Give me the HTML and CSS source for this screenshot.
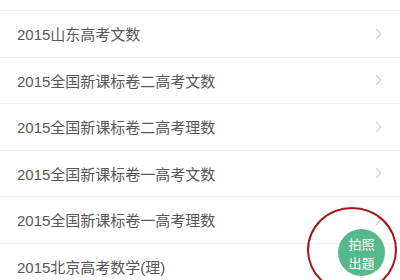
FILE: index.html
```html
<!DOCTYPE html>
<html lang="zh">
<head>
<meta charset="utf-8">
<link rel="stylesheet" href="styles.css">
</head>
<body>
<div class="page">
  <div class="stub"></div>
  <ul class="list">
    <li class="row"><span class="title">2015山东高考文数</span><svg class="chev" viewBox="0 0 7 12"><polyline points="1,1 6,6 1,11"/></svg></li>
    <li class="row"><span class="title">2015全国新课标卷二高考文数</span><svg class="chev" viewBox="0 0 7 12"><polyline points="1,1 6,6 1,11"/></svg></li>
    <li class="row"><span class="title">2015全国新课标卷二高考理数</span><svg class="chev" viewBox="0 0 7 12"><polyline points="1,1 6,6 1,11"/></svg></li>
    <li class="row"><span class="title">2015全国新课标卷一高考文数</span><svg class="chev" viewBox="0 0 7 12"><polyline points="1,1 6,6 1,11"/></svg></li>
    <li class="row"><span class="title">2015全国新课标卷一高考理数</span><svg class="chev" viewBox="0 0 7 12"><polyline points="1,1 6,6 1,11"/></svg></li>
    <li class="row"><span class="title">2015北京高考数学(理)</span><svg class="chev" viewBox="0 0 7 12"><polyline points="1,1 6,6 1,11"/></svg></li>
  </ul>
  <div class="annot"></div>
  <button class="fab">拍照<br>出题</button>
</div>
</body>
</html>
```
FILE: styles.css
```css
html, body {
  margin: 0;
  padding: 0;
  background: #fff;
}
.page {
  position: relative;
  width: 400px;
  height: 280px;
  overflow: hidden;
  font-family: "Liberation Sans", "Noto Sans CJK SC", sans-serif;
}
.stub {
  height: 10px;
  border-bottom: 1px solid #efefef;
}
.list {
  list-style: none;
  margin: 0;
  padding: 0;
}
.row {
  box-sizing: border-box;
  height: 46.5px;
  display: flex;
  align-items: center;
  justify-content: space-between;
  padding: 0 18px 0 17px;
  border-bottom: 1px solid #efefef;
}
.title {
  font-size: 15px;
  color: #575757;
}
.chev {
  width: 7px;
  height: 12px;
  fill: none;
  stroke: #d2d2d2;
  stroke-width: 1.2;
}
.annot {
  position: absolute;
  left: 307px;
  top: 207px;
  width: 90px;
  height: 86px;
  box-sizing: border-box;
  border: 2px solid #a3161b;
  border-radius: 50%;
}
.fab {
  position: absolute;
  left: 338px;
  top: 229px;
  width: 47px;
  height: 47px;
  border: none;
  border-radius: 50%;
  background: #55b98b;
  color: #fff;
  font-family: "Noto Sans CJK SC", sans-serif;
  font-size: 13px;
  line-height: 19px;
  padding: 0;
}
```
